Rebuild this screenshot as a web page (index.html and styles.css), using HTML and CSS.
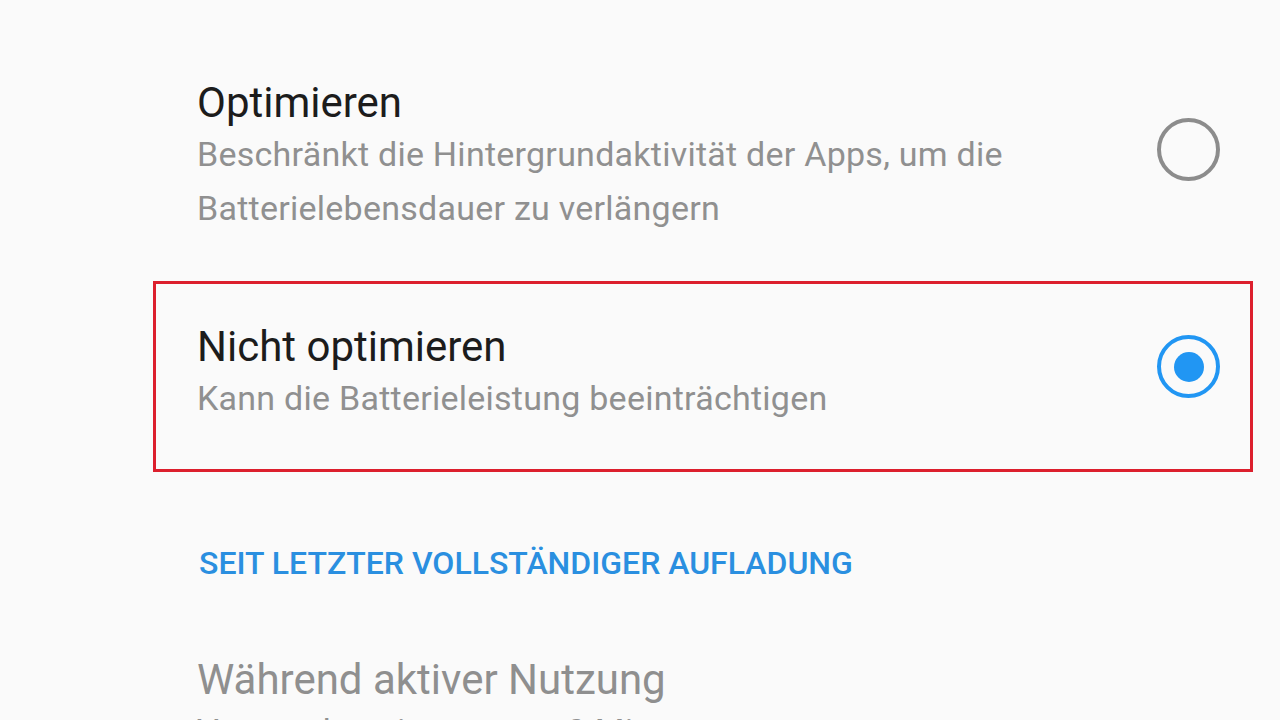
FILE: index.html
```html
<!DOCTYPE html>
<html lang="de">
<head>
<meta charset="utf-8">
<title>Akku-Optimierung</title>
<link rel="stylesheet" href="styles.css">
</head>
<body>
<div class="screen">
    <div class="option">
        <div class="text">
            <div class="title">Optimieren</div>
            <div class="summary">Beschränkt die Hintergrundaktivität der Apps, um die Batterielebensdauer zu verlängern</div>
        </div>
        <div class="radio"></div>
    </div>

    <div class="option marked">
        <div class="text">
            <div class="title">Nicht optimieren</div>
            <div class="summary">Kann die Batterieleistung beeinträchtigen</div>
        </div>
        <div class="radio checked"></div>
    </div>

    <div class="category">SEIT LETZTER VOLLSTÄNDIGER AUFLADUNG</div>

    <div class="usage">
        <div class="title dim">Während aktiver Nutzung</div>
        <div class="summary">Verwendung insgesamt 0 Min.</div>
    </div>
</div>
</body>
</html>
```

FILE: styles.css
```css
html, body {
    margin: 0;
    padding: 0;
    background: #fafafa;
}
.screen {
    width: 1280px;
    height: 720px;
    overflow: hidden;
    font-family: Roboto, "Noto Sans", sans-serif;
    padding-top: 35px;
    box-sizing: border-box;
}
.option {
    position: relative;
    display: flex;
    align-items: center;
    padding: 44px 60px 44px 197px;
}
.text {
    flex: 1;
    padding-right: 120px;
}
.title {
    font-size: 42px;
    line-height: 48px;
    color: #1c1c1c;
}
.title.dim {
    color: #8f8f8f;
}
.summary {
    font-size: 34px;
    line-height: 54px;
    letter-spacing: 0.25px;
    color: #909090;
}
.radio {
    width: 55px;
    height: 55px;
    border: 4.5px solid #8c8c8c;
    border-radius: 50%;
    margin-bottom: 15px;
    flex-shrink: 0;
    position: relative;
}
.radio.checked {
    border-color: #2196f3;
}
.radio.checked::after {
    content: "";
    position: absolute;
    left: 50%;
    top: 50%;
    width: 30px;
    height: 30px;
    margin: -15px 0 0 -15px;
    border-radius: 50%;
    background: #2196f3;
}
.marked::before {
    content: "";
    position: absolute;
    left: 153px;
    right: 27px;
    top: 2px;
    bottom: -3px;
    border: 3.5px solid #dc1f2d;
}
.category {
    margin-top: 74px;
    padding-left: 199px;
    font-size: 32px;
    font-weight: 500;
    line-height: 40px;
    color: #2a8fe0;
}
.usage {
    margin-top: 73px;
    padding-left: 197px;
}
```
